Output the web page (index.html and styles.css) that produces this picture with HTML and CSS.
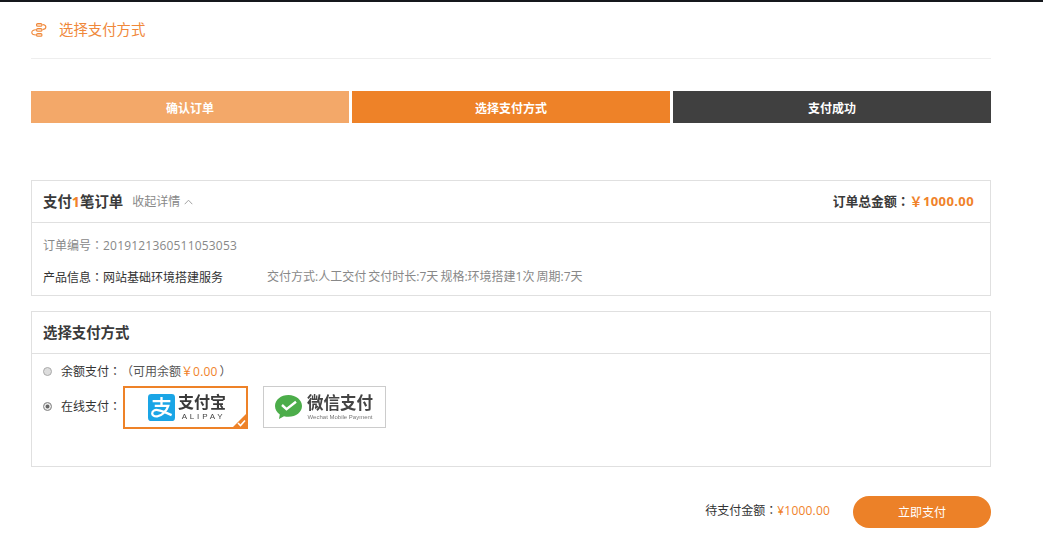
FILE: index.html
```html
<!DOCTYPE html>
<html lang="zh">
<head>
<meta charset="utf-8">
<title>选择支付方式</title>
<link rel="stylesheet" href="styles.css">
</head>
<body>
<div class="topbar"></div>
<main class="page">
  <header class="head">
    <svg class="head-icon" width="16" height="14" viewBox="0 0 16 14" fill="#fde6d3" stroke="#f0883a" stroke-width="1.1">
      <rect x="5.500" y="0.600" width="5.500" height="2.600" rx="1.300"/>
      <rect x="5.500" y="5.600" width="5.500" height="2.600" rx="1.300"/>
      <rect x="5.500" y="10.600" width="5.500" height="2.600" rx="1.300"/>
      <path fill="none" d="M11.500 1.500c4.500.4 4.500 4.700 0 5.100M5 6.800C-.6 7.200-.6 11.800 5 12"/>
    </svg>
    <span class="head-title">选择支付方式</span>
  </header>

  <ol class="steps">
    <li class="step step-done">确认订单</li>
    <li class="step step-now">选择支付方式</li>
    <li class="step step-next">支付成功</li>
  </ol>

  <section class="panel panel-order">
    <div class="panel-head">
      <h2 class="panel-title">支付<b class="accent">1</b>笔订单</h2>
      <span class="toggle">收起详情
        <svg class="chev" width="9" height="6" viewBox="0 0 9 6" fill="none" stroke="#a3a3a3"><path d="M.7 5.200 4.500 1.200l3.800 4"/></svg>
      </span>
      <span class="total">订单总金额<span class="punct" lang="zh-Hant">：</span><b class="accent total-num">￥1000.00</b></span>
    </div>
    <div class="order-body">
      <p class="order-no">订单编号<span class="punct" lang="zh-Hant">：</span><span class="digits">2019121360511053053</span></p>
      <p class="order-info"><span class="product">产品信息<span class="punct" lang="zh-Hant">：</span>网站基础环境搭建服务</span><span class="spec">交付方式:人工交付 交付时长:7天 规格:环境搭建1次 周期:7天</span></p>
    </div>
  </section>

  <section class="panel panel-pay">
    <div class="panel-head">
      <h2 class="panel-title">选择支付方式</h2>
    </div>
    <div class="pay-body">
      <div class="pay-row pay-balance">
        <span class="radio"></span>
        <span class="pay-label">余额支付<span class="punct" lang="zh-Hant">：</span></span>
        <span class="balance"><span class="punct" lang="zh-Hant">（</span>可用余额<span class="accent-thin">￥<span class="digits">0.00</span></span><span class="punct paren-close" lang="zh-Hant">）</span></span>
      </div>
      <div class="pay-row pay-online">
        <span class="radio radio-on"></span>
        <span class="pay-label">在线支付<span class="punct" lang="zh-Hant">：</span></span>
        <div class="method method-on">
          <svg class="ali-icon" width="27" height="27" viewBox="0 0 32 32">
            <rect width="32" height="32" rx="4" fill="#1aa5e6"/>
            <path d="M5.500 8.500h21M16 3.500v10.500M8 14h16c-2 6.500-8 12-13 12.500-4 .4-6-1.500-6-3.500 0-3 3-4.500 6.500-4 4 .5 10 3 16.500 6" fill="none" stroke="#fff" stroke-width="2.700"/>
          </svg>
          <span class="ali-text"><span class="ali-cn">支付宝</span><span class="ali-en">ALIPAY</span></span>
          <span class="corner"></span>
          <svg class="tick" width="9" height="8" viewBox="0 0 9 8" fill="none" stroke="#fff" stroke-width="1.600"><path d="M1 4l2.500 2.500L8 1.500"/></svg>
        </div>
        <div class="method method-wx">
          <svg class="wx-icon" width="29" height="26" viewBox="0 0 29 26">
            <path d="M14.500 1C6.900 1 1 5.900 1 12c0 3.400 1.900 6.400 4.800 8.400L5 25l5-2.800c1.400.4 2.900.6 4.500.6C22.100 22.800 28 18 28 12S22.100 1 14.500 1z" fill="#4cad4a"/>
            <path d="M8 11l4.500 4.200L22 7.800" fill="none" stroke="#fff" stroke-width="2.400"/>
          </svg>
          <span class="wx-text"><span class="wx-cn">微信支付</span><span class="wx-en">Wechat Mobile Payment</span></span>
        </div>
      </div>
    </div>
  </section>

  <footer class="foot">
    <span class="due">待支付金额<span class="punct" lang="zh-Hant">：</span><span class="accent-thin digits">¥1000.00</span></span>
    <button class="pay-btn" type="button">立即支付</button>
  </footer>
</main>
</body>
</html>
```
FILE: styles.css
```css
* { box-sizing: border-box; }
html, body { margin: 0; padding: 0; }
body {
  background: #fff;
  color: #333;
  font-family: "Open Sans", "Noto Sans CJK SC", sans-serif;
  font-size: 12px;
  overflow: hidden;
  height: 548px;
}
.topbar { height: 2px; background: #15181c; }
.page { width: 960px; margin-left: 31px; }
.punct { font-family: "Noto Sans CJK TC", sans-serif; }
.paren-close { margin-left: 2px; }
.digits { letter-spacing: 0.19px; }

.head {
  height: 57px;
  display: flex;
  align-items: center;
  gap: 12px;
  border-bottom: 1px solid #eee;
}
.head-icon { display: block; }
.head-title { font-size: 14.4px; line-height: 20px; color: #f0883a; }

.steps {
  list-style: none;
  margin: 32px 0 0;
  padding: 0;
  height: 32px;
  display: flex;
  gap: 3px;
}
.step {
  flex: 1;
  display: flex;
  align-items: center;
  justify-content: center;
  color: #fff;
  font-size: 12px;
  font-weight: 700;
  padding-top: 1px;
}
.step-done { background: #f3a869; }
.step-now { background: #ee8228; }
.step-next { background: #404040; }

.panel { border: 1px solid #e0e0e0; }
.panel-order { margin-top: 57px; height: 116px; }
.panel-pay { margin-top: 15px; height: 156px; }
.panel-head {
  height: 42px;
  border-bottom: 1px solid #e0e0e0;
  display: flex;
  align-items: center;
  padding: 0 16px 0 11px;
}
.panel-title { margin: 0; font-size: 14.4px; line-height: 20px; font-weight: 700; color: #3a3a3a; }
.accent { color: #f0822a; font-weight: 700; }
.accent-thin { color: #f0822a; }
.toggle {
  margin-left: 9px;
  color: #888;
  font-size: 12px;
  line-height: 18px;
  display: flex;
  align-items: center;
  gap: 4px;
}
.total { margin-left: auto; margin-bottom: 2px; font-size: 12.8px; line-height: 18px; font-weight: 700; color: #3a3a3a; }
.total-num { font-size: 13px; letter-spacing: 0.4px; }

.order-body { padding: 0 11px; }
.order-no { margin: 13px 0 0; line-height: 18px; color: #888; }
.order-info { margin: 13px 0 0; line-height: 18px; display: flex; }
.product { width: 224px; color: #333; }
.spec { color: #888; word-spacing: -1px; }

.pay-body { padding: 7px 11px 0; }
.pay-row { display: flex; align-items: center; }
.pay-balance { height: 20px; }
.pay-online { margin-top: 5px; }
.pay-online .radio, .pay-online .pay-label { margin-bottom: 3px; }
.radio {
  width: 9px;
  height: 9px;
  border-radius: 50%;
  background: #ddd;
  border: 1px solid #aaa;
  margin-right: 9px;
  flex: none;
}
.radio-on { background: #666; box-shadow: inset 0 0 0 1.500px #eee; border-color: #999; }
.pay-label { color: #333; }
.balance { color: #555; }

.method { position: relative; display: flex; align-items: center; flex: none; align-self: flex-start; }
.method-on {
  width: 125px;
  height: 43px;
  margin-left: 2px;
  border: 2px solid #ee8228;
  padding-left: 23px;
  gap: 3px;
}
.ali-icon { display: block; flex: none; filter: blur(.3px); }
.ali-text { display: flex; flex-direction: column; align-items: center; color: #3a3a3a; filter: blur(.3px); }
.ali-cn { font-size: 16px; line-height: 16px; font-weight: 700; }
.ali-en { font-family: "Liberation Sans", sans-serif; font-size: 8px; line-height: 9px; letter-spacing: 2.800px; margin-top: 2px; margin-right: -3px; color: #444; }
.corner {
  position: absolute;
  right: 0;
  bottom: 0;
  width: 0;
  height: 0;
  border-style: solid;
  border-width: 0 0 13px 13px;
  border-color: transparent transparent #ee8228 transparent;
}
.tick { position: absolute; right: 0; bottom: 0; }

.method-wx {
  width: 123px;
  height: 42px;
  margin-left: 15px;
  border: 1px solid #ccc;
  padding-left: 10px;
  gap: 4px;
}
.wx-icon { display: block; flex: none; filter: blur(.3px); }
.wx-text { display: flex; flex-direction: column; align-items: center; color: #444; filter: blur(.4px); }
.wx-cn { font-size: 16.500px; line-height: 18px; font-weight: 700; }
.wx-en { font-family: "Liberation Sans", sans-serif; font-size: 6px; line-height: 8px; margin-top: 1px; color: #777; }

.foot {
  margin-top: 29px;
  display: flex;
  justify-content: flex-end;
  align-items: center;
  gap: 23px;
}
.due { color: #333; margin-bottom: 4px; }
.pay-btn {
  width: 138px;
  height: 32px;
  border: 0;
  border-radius: 16px;
  background: #ec8128;
  color: #fff;
  font: inherit;
  font-size: 12px;
  padding: 0;
}
```
